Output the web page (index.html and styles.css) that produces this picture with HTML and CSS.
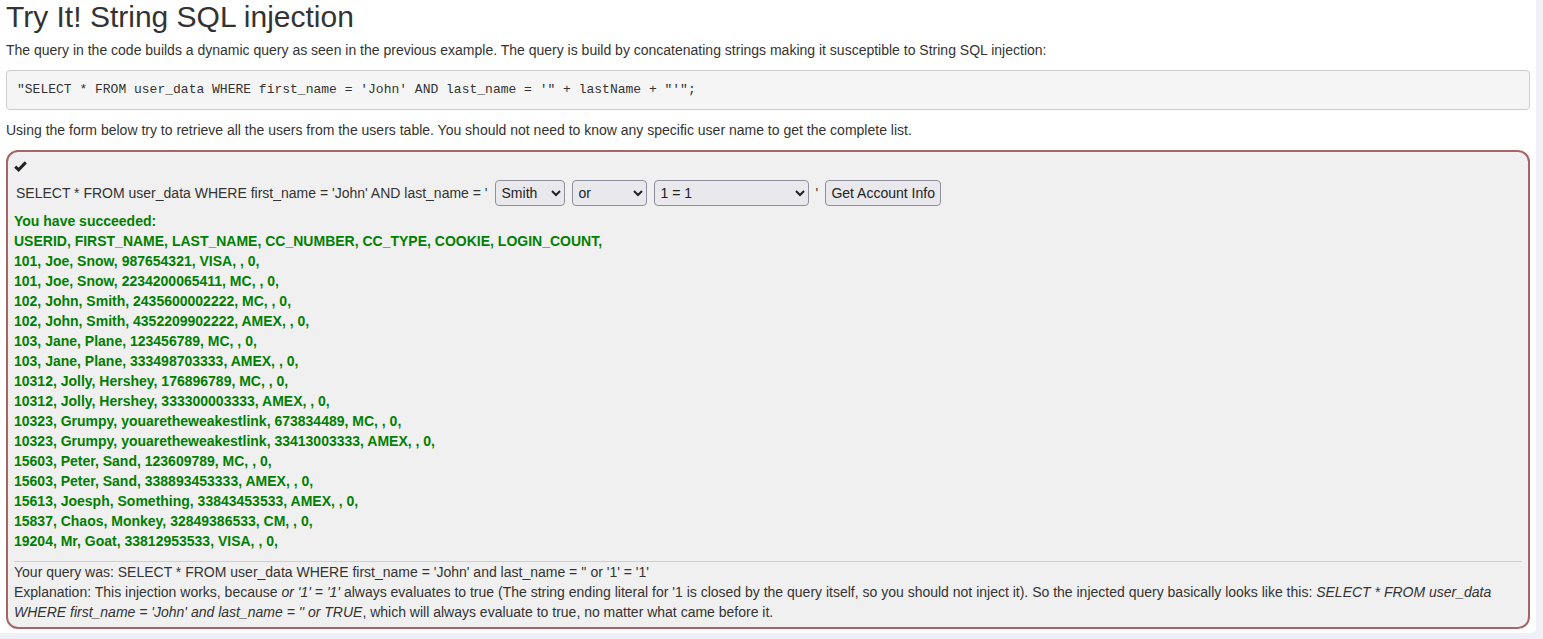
FILE: index.html
```html
<!DOCTYPE html>
<html>
<head>
<meta charset="utf-8">
<link rel="stylesheet" href="styles.css">
</head>
<body>
<div class="panel">
  <h2 class="title">Try It! String SQL injection</h2>
  <p class="text">The query in the code builds a dynamic query as seen in the previous example. The query is build by concatenating strings making it susceptible to String SQL injection:</p>
  <pre class="code">"SELECT * FROM user_data WHERE first_name = 'John' AND last_name = '" + lastName + "'";</pre>
  <p class="text">Using the form below try to retrieve all the users from the users table. You should not need to know any specific user name to get the complete list.</p>
  <div class="attack">
    <div class="check"><svg width="13" height="11" viewBox="0 0 13 11"><path d="M1.2 5.6 L4.6 8.8 L11.8 1.4" fill="none" stroke="#222" stroke-width="3" stroke-linejoin="miter"/></svg></div>
    <form class="row">
      <span class="lbl">SELECT * FROM user_data WHERE first_name = 'John' AND last_name = '</span>
      <select class="sel sel-name"><option>Smith</option></select>
      <select class="sel sel-op"><option>or</option></select>
      <select class="sel sel-cond"><option>1 = 1</option></select>
      <span class="lbl">'</span>
      <button type="button" class="btn">Get Account Info</button>
    </form>
    <div class="output">
      <div>You have succeeded:</div>
      <div>USERID, FIRST_NAME, LAST_NAME, CC_NUMBER, CC_TYPE, COOKIE, LOGIN_COUNT,</div>
      <div>101, Joe, Snow, 987654321, VISA, , 0,</div>
      <div>101, Joe, Snow, 2234200065411, MC, , 0,</div>
      <div>102, John, Smith, 2435600002222, MC, , 0,</div>
      <div>102, John, Smith, 4352209902222, AMEX, , 0,</div>
      <div>103, Jane, Plane, 123456789, MC, , 0,</div>
      <div>103, Jane, Plane, 333498703333, AMEX, , 0,</div>
      <div>10312, Jolly, Hershey, 176896789, MC, , 0,</div>
      <div>10312, Jolly, Hershey, 333300003333, AMEX, , 0,</div>
      <div>10323, Grumpy, youaretheweakestlink, 673834489, MC, , 0,</div>
      <div>10323, Grumpy, youaretheweakestlink, 33413003333, AMEX, , 0,</div>
      <div>15603, Peter, Sand, 123609789, MC, , 0,</div>
      <div>15603, Peter, Sand, 338893453333, AMEX, , 0,</div>
      <div>15613, Joesph, Something, 33843453533, AMEX, , 0,</div>
      <div>15837, Chaos, Monkey, 32849386533, CM, , 0,</div>
      <div>19204, Mr, Goat, 33812953533, VISA, , 0,</div>
    </div>
    <hr class="sep">
    <div class="feedback">
      <div>Your query was: SELECT * FROM user_data WHERE first_name = 'John' and last_name = '' or '1' = '1'</div>
      <div>Explanation: This injection works, because <em>or '1' = '1'</em> always evaluates to true (The string ending literal for '1 is closed by the query itself, so you should not inject it). So the injected query basically looks like this: <em>SELECT * FROM user_data WHERE first_name = 'John' and last_name = '' or TRUE</em>, which will always evaluate to true, no matter what came before it.</div>
    </div>
  </div>
</div>
</body>
</html>
```

FILE: styles.css
```css
html, body {
  margin: 0;
  padding: 0;
}
body {
  background: #eff0f6;
  font-family: "Liberation Sans", Arial, sans-serif;
  font-size: 14px;
  line-height: 20px;
  color: #333;
  height: 639px;
  overflow: hidden;
}
.panel {
  width: 1524px;
  padding: 0 6px 4px 6px;
  background: #fff;
  border-bottom-right-radius: 5px;
}
.title {
  margin: 0 0 7px 0;
  font-size: 30px;
  line-height: 33px;
  font-weight: 500;
  color: #333;
}
.text {
  margin: 0 0 10px 0;
}
.code {
  margin: 0 0 10px 0;
  padding: 9.5px 10px;
  font-family: "Liberation Mono", "Courier New", monospace;
  font-size: 13px;
  line-height: 18.57px;
  color: #333;
  background: #f5f5f5;
  border: 1px solid #ccc;
  border-radius: 4px;
  white-space: pre;
}
.attack {
  background: #f0f0f0;
  border: 2px solid #a86565;
  border-radius: 12px;
  padding: 5px 6px 5px 6px;
}
.check {
  height: 20px;
  display: flex;
  align-items: center;
}
.check svg {
  display: block;
}
.row {
  display: flex;
  align-items: center;
  gap: 7px;
  margin: 3px 0 5px 0;
  padding-left: 2px;
  height: 26px;
}
.lbl {
  white-space: pre;
}
.sel {
  height: 26px;
  font-family: "Liberation Sans", Arial, sans-serif;
  font-size: 14px;
  color: #222;
  background: #e9e9ed;
  border: 1px solid #8f8f9d;
  border-radius: 4px;
  padding: 0 2px;
  margin: 0;
}
.sel-name { width: 70px; }
.sel-op { width: 75px; }
.sel-cond { width: 155px; }
.btn {
  height: 26px;
  width: 116px;
  font-family: "Liberation Sans", Arial, sans-serif;
  font-size: 14px;
  color: #222;
  background: #e9e9ed;
  border: 1px solid #8f8f9d;
  border-radius: 4px;
  padding: 0 4px;
  margin: 0;
}
.output {
  color: #008000;
  font-weight: bold;
}
.sep {
  margin: 10px 0 0 0;
  border: 0;
  border-top: 1px solid #cfcfcf;
  height: 0;
}
.feedback em {
  font-style: italic;
}
```
